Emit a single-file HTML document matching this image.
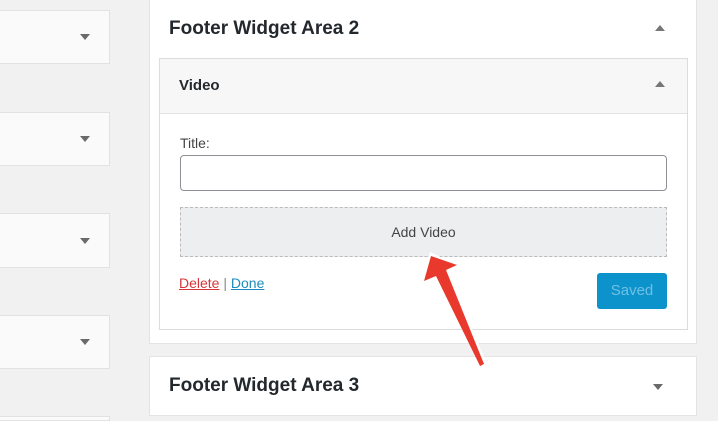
<!DOCTYPE html>
<html style="width:718px;height:421px;overflow:hidden"><head><style>
body{margin:0;width:718px;height:421px;background:#f1f1f1;font-family:"Liberation Sans",sans-serif;position:relative;overflow:hidden}
.b{position:absolute;background:#fafafa;border:1px solid #e2e2e2;box-sizing:border-box}
.t{position:absolute;width:0;height:0;border-left:5px solid transparent;border-right:5px solid transparent}
.dn{border-top:6px solid #6a6a6a}.up{border-bottom:6px solid #777}
.a{position:absolute}
</style></head><body>
<div class="b" style="left:-2px;top:10px;width:112px;height:54px"></div><div class="t dn" style="left:80px;top:34px"></div>
<div class="b" style="left:-2px;top:112px;width:112px;height:54px"></div><div class="t dn" style="left:80px;top:136px"></div>
<div class="b" style="left:-2px;top:213px;width:112px;height:55px"></div><div class="t dn" style="left:80px;top:238px"></div>
<div class="b" style="left:-2px;top:315px;width:112px;height:54px"></div><div class="t dn" style="left:80px;top:339px"></div>
<div class="b" style="left:-2px;top:416px;width:112px;height:5px"></div>

<div class="b" style="left:149px;top:-2px;width:548px;height:346px;background:#fff;border-color:#e4e4e4"></div>
<div class="a" style="left:169px;top:18px;font-size:19px;font-weight:bold;color:#23282d">Footer Widget Area 2</div>
<div class="t up" style="left:655px;top:25px"></div>
<div class="b" style="left:159px;top:58px;width:529px;height:272px;background:#fff;border-color:#dcdcdc"></div>
<div class="a" style="left:160px;top:59px;width:527px;height:54px;background:#f7f7f7;border-bottom:1px solid #e2e2e2"></div>
<div class="a" style="left:179px;top:77px;font-size:15px;font-weight:bold;color:#23282d">Video</div>
<div class="t up" style="left:655px;top:81px"></div>
<div class="a" style="left:180px;top:135px;font-size:14px;color:#444">Title:</div>
<div class="a" style="left:180px;top:155px;width:487px;height:36px;border:1px solid #8c8f94;border-radius:4px;box-sizing:border-box;background:#fff"></div>
<div class="a" style="left:180px;top:207px;width:487px;height:50px;border:1px dashed #bbb;box-sizing:border-box;background:#eceef0;text-align:center;line-height:48px;font-size:14px;color:#444">Add Video</div>
<div class="a" style="left:179px;top:275px;font-size:14px"><span style="color:#d63638;text-decoration:underline">Delete</span> <span style="color:#888">|</span> <span style="color:#1e8cbe;text-decoration:underline">Done</span></div>
<div class="a" style="left:597px;top:273px;width:70px;height:36px;background:#0d93cc;border-radius:3px;color:#6fc0e3;font-size:15px;text-align:center;line-height:36px">Saved</div>

<div class="b" style="left:149px;top:356px;width:548px;height:60px;background:#fff;border-color:#e4e4e4"></div>
<div class="a" style="left:169px;top:375px;font-size:19px;font-weight:bold;color:#23282d">Footer Widget Area 3</div>
<div class="t dn" style="left:653px;top:384px"></div>

<svg class="a" style="left:0;top:0" width="718" height="421">
<polygon points="482,368 487,364 448,272 460,266 430,252 422,284 435,278" fill="#fff" opacity="0.9"/>
<polygon points="480,366 484,364 446,270 457,265 431,256 424,281 436,276" fill="#e8392c"/>
</svg>
</body></html>
